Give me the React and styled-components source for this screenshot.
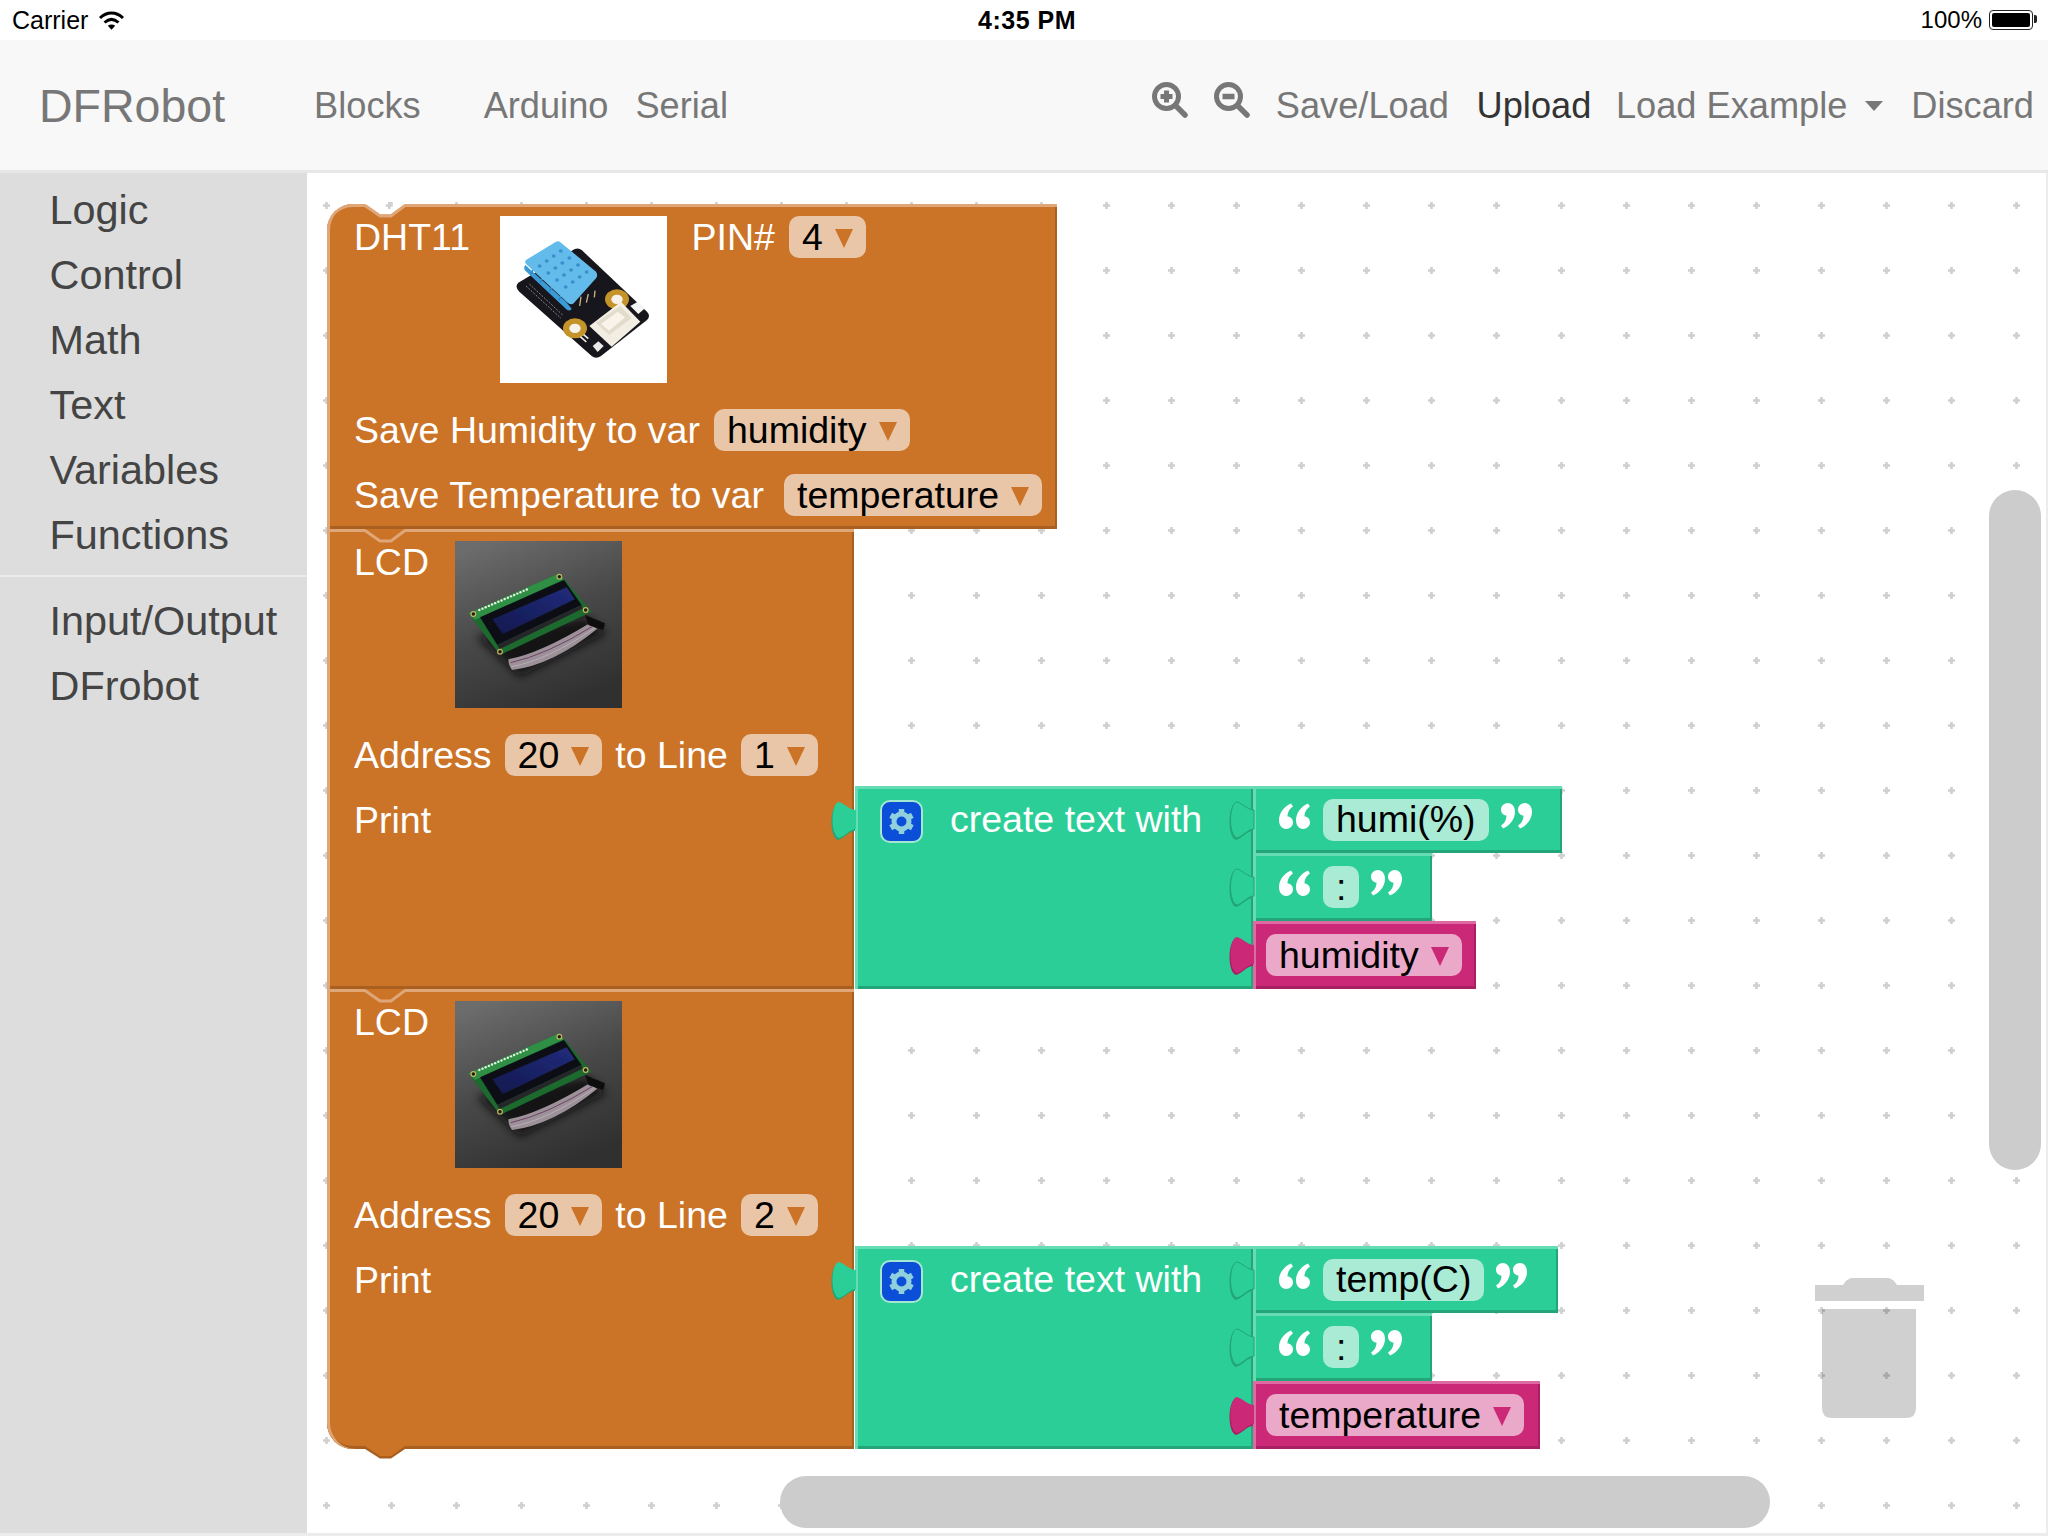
import React from "react";
import styled, { createGlobalStyle } from "styled-components";

const ORANGE = { fill: "#cb7327", light: "#dfa677", dark: "#a85f1f", field: "#e9c6a8" };
const GREEN = { fill: "#2bce96", light: "#65dcb4", dark: "#23a577", field: "#aaebd5" };
const PINK = { fill: "#cb2878", light: "#dd6aa2", dark: "#a82063", field: "#eaa9c9" };

const gridTile = encodeURIComponent(
  '<svg xmlns="http://www.w3.org/2000/svg" width="65" height="65"><path d="M31.2 29h2.6v2.2H36v2.6h-2.2V36h-2.6v-2.2H29v-2.6h2.2z" fill="#cfcfcf"/></svg>'
);

const Global = createGlobalStyle`
  * { box-sizing: border-box; }
  html, body { margin: 0; padding: 0; background: #fff; }
  body { font-family: "Liberation Sans", Arial, sans-serif; }
`;

const Page = styled.div`
  width: 2048px;
  height: 1536px;
  display: flex;
  flex-direction: column;
  overflow: hidden;
  background: #fff;
`;

/* status bar */
const StatusBar = styled.div`
  height: 40px;
  display: grid;
  grid-template-columns: 1fr auto 1fr;
  align-items: center;
  padding: 0 12px;
  font-size: 25px;
  color: #000;
`;
const StatusLeft = styled.div`
  display: flex;
  align-items: center;
  gap: 10px;
`;
const StatusRight = styled.div`
  display: flex;
  align-items: center;
  justify-content: flex-end;
  gap: 7px;
  font-size: 24px;
`;
const Clock = styled.div`
  font-weight: 700;
  font-size: 25px;
  letter-spacing: 0.5px;
  margin-left: 6px;
`;
const Battery = styled.div`
  position: relative;
  width: 44px;
  height: 20px;
  margin-right: 3px;
  padding: 2px;
  border: 1.5px solid #222;
  border-radius: 4px;
  &::before {
    content: "";
    display: block;
    height: 100%;
    background: #000;
    border-radius: 2px;
  }
  &::after {
    content: "";
    position: absolute;
    right: -5px;
    top: 4px;
    width: 3px;
    height: 8px;
    background: #222;
    border-radius: 0 2px 2px 0;
  }
`;

/* navbar */
const Navbar = styled.div`
  height: 133px;
  display: flex;
  align-items: center;
  padding: 2px 14px 0 39px;
  background: #f8f8f8;
  border-bottom: 3px solid #e7e7e7;
  color: #777;
  font-size: 36.2px;
`;
const Brand = styled.div`
  font-size: 46.5px;
  margin-right: 89px;
`;
const NavLink = styled.div`
  margin-left: ${(p) => p.$gap || 0}px;
  color: ${(p) => (p.$active ? "#333" : "#777")};
`;
const NavSpacer = styled.div`
  flex: 1;
`;
const ZoomIcon = styled.svg`
  width: 36px;
  height: 36px;
  margin-left: ${(p) => p.$gap || 0}px;
  margin-top: -12px;
`;
const Caret = styled.span`
  margin-left: 18px;
  width: 0;
  height: 0;
  border-left: 9px solid transparent;
  border-right: 9px solid transparent;
  border-top: 10px solid #777;
`;

/* main */
const Main = styled.div`
  flex: 1;
  display: flex;
  min-height: 0;
  border-bottom: 3px solid #ececec;
`;
const Sidebar = styled.div`
  width: 307px;
  padding-top: 5px;
  background: #ddd;
  color: #444;
  font-size: 41.4px;
`;
const TreeItem = styled.div`
  height: 65px;
  line-height: 65px;
  padding-left: 49.5px;
`;
const TreeSeparator = styled.div`
  height: 2px;
  margin: 7px 0 12px;
  background: #ebebeb;
`;
const Workspace = styled.div`
  position: relative;
  flex: 1;
  overflow: hidden;
  border-right: 2px solid #ececec;
  background-color: #fff;
  background-image: url("data:image/svg+xml,${gridTile}");
  background-position: -13.2px -0.5px;
`;
const BlockStack = styled.div`
  position: absolute;
  left: 20px;
  top: 31px;
  display: flex;
  flex-direction: column;
  font-size: 37.5px;
  color: #fff;
`;
const StackRow = styled.div`
  display: flex;
  align-items: flex-start;
`;
const Bevel = styled.div`
  position: relative;
  background: ${(p) => p.$c.fill};
  box-shadow: inset 3px 0 0 ${(p) => p.$c.light}, inset 0 3px 0 ${(p) => p.$c.light},
    inset -2px 0 0 ${(p) => p.$c.dark}, inset 0 -3px 0 ${(p) => p.$c.dark};
`;
const StatementBlock = styled(Bevel)`
  width: ${(p) => p.$w}px;
  height: ${(p) => p.$h}px;
  padding: 12px 0 0 27px;
  border-radius: ${(p) => (p.$hat ? "26px" : "0")} 0 0 ${(p) => (p.$last ? "26px" : "0")};
  display: flex;
  flex-direction: column;
  gap: 23px;
`;
const TopRow = styled.div`
  display: flex;
  align-items: flex-start;
  gap: 14px;
  margin-bottom: 3px;
`;
const FieldRow = styled.div`
  display: flex;
  align-items: center;
  gap: ${(p) => p.$gap || 14}px;
  height: 42px;
`;
const Label = styled.span`
  line-height: 42px;
  white-space: nowrap;
  min-width: ${(p) => p.$w || 0}px;
`;
const Field = styled.span`
  display: inline-flex;
  align-items: center;
  height: 42px;
  padding: 0 13px;
  gap: 12px;
  border-radius: 10px;
  background: ${(p) => p.$c.field};
  color: #000;
  white-space: nowrap;
`;
const Arrow = styled.span`
  width: 0;
  height: 0;
  margin-top: 2px;
  border-left: 9px solid transparent;
  border-right: 9px solid transparent;
  border-top: 19px solid ${(p) => p.$c.fill};
`;
const Picture = styled.svg`
  display: block;
  width: 167px;
  height: 167px;
  margin: 0 11px;
`;
const NotchSvg = styled.svg`
  position: absolute;
  left: 38px;
  top: 0;
  overflow: visible;
`;
const TabBottom = styled.svg`
  position: absolute;
  left: 38px;
  bottom: -11px;
  overflow: visible;
`;
const ValueWrap = styled.div`
  display: flex;
  align-items: flex-start;
  margin: 257px 0 0 1px;
`;
const CreateBlock = styled(Bevel)`
  width: 398px;
  height: 203px;
  padding: 12px 0 0 25px;
  display: flex;
  align-items: flex-start;
  gap: 27px;
`;
const GearBox = styled.svg`
  display: block;
  width: 43px;
  height: 43px;
  margin-top: 2px;
`;
const Inputs = styled.div`
  display: flex;
  flex-direction: column;
`;
const ValueBlock = styled(Bevel)`
  height: ${(p) => p.$h}px;
  width: ${(p) => p.$w}px;
  padding-left: ${(p) => p.$pad}px;
  display: flex;
  align-items: center;
`;
const Quote = styled.svg`
  width: 31px;
  height: 26px;
  margin: -8px 0 0 ${(p) => p.$before}px;
  margin-right: ${(p) => p.$after}px;
`;
const TabSvg = styled.svg`
  position: absolute;
  left: -24px;
  top: 16px;
  width: 25px;
  height: 38px;
  overflow: visible;
`;
const VScroll = styled.div`
  position: absolute;
  left: 1682px;
  top: 317px;
  width: 52px;
  height: 680px;
  border-radius: 26px;
  background: #ccc;
`;
const HScroll = styled.div`
  position: absolute;
  left: 473px;
  top: 1303px;
  width: 990px;
  height: 52px;
  border-radius: 26px;
  background: #ccc;
`;
const Trash = styled.svg`
  position: absolute;
  left: 1508px;
  top: 1105px;
  width: 109px;
  height: 141px;
`;

const Magnifier = ({ gap, plus }) => (
  <ZoomIcon $gap={gap} viewBox="0 0 36 36">
    <circle cx="14.5" cy="14.5" r="12" fill="none" stroke="#777" strokeWidth="5" />
    <path d="M23.5 23.5L33 33" stroke="#777" strokeWidth="5.5" strokeLinecap="round" />
    {plus ? (
      <path d="M14.5 8.5v12M8.5 14.5h12" stroke="#777" strokeWidth="5" />
    ) : (
      <path d="M8.5 14.5h12" stroke="#777" strokeWidth="5.5" />
    )}
  </ZoomIcon>
);

const Wifi = () => (
  <svg width="27" height="19" viewBox="0 0 27 19">
    <path d="M2 7C9 .3 18 .3 25 7M6.5 11.5c4.5-4 9.500-4 14 0" fill="none" stroke="#000" strokeWidth="3" />
    <path d="M9.800 14.800l3.700 3.900 3.700-3.900c-2.200-1.700-5.200-1.700-7.400 0z" fill="#000" />
  </svg>
);

const DhtPicture = () => {
  const holes = [];
  for (let i = 0; i < 4; i++) {
    for (let j = 0; j < 4; j++) {
      holes.push(<ellipse key={i + "-" + j} cx={176 + i * 26 + j * 21} cy={198 + i * 21 - j * 15} rx="6" ry="5" fill="#3a8fca" />);
    }
  }
  return (
    <Picture viewBox="57 48 501 501">
      <defs>
        <filter id="soft">
          <feGaussianBlur stdDeviation="2" />
        </filter>
      </defs>
      <rect x="57" y="48" width="501" height="501" fill="#fff" />
      <g filter="url(#soft)">
        <path d="M112 248L280 148Q292 142 302 150L498 335Q510 348 498 360L360 468Q345 478 332 468L115 275Q100 260 112 248Z" fill="#17151a" />
        <path d="M133 195L255 305L272 326Q266 336 256 328L133 212Q126 204 133 195Z" fill="#3a9bd6" />
        <path d="M150 222L158 205M178 248L186 231M206 274L214 257M234 300L242 283" stroke="#2f86c2" strokeWidth="5" />
        <path d="M135 180L225 125Q232 122 240 128L345 215Q352 225 345 235L278 310Q270 316 260 308L135 192Q130 186 135 180Z" fill="#63bbec" />
        {holes}
        <path d="M300 290L296 318M322 282L316 308M342 272L340 292" stroke="#c9b48a" strokeWidth="4" />
        <path d="M135 258L240 355M145 252L245 345" stroke="#8a8a8a" strokeWidth="3" strokeDasharray="6 4" />
        <ellipse cx="408" cy="298" rx="36" ry="30" fill="#c4932c" />
        <ellipse cx="408" cy="298" rx="17" ry="14" fill="#f7f3ea" />
        <ellipse cx="282" cy="385" rx="36" ry="30" fill="#c4932c" />
        <ellipse cx="282" cy="385" rx="17" ry="14" fill="#f7f3ea" />
        <path d="M325 378L420 305L478 365L392 440Z" fill="#f3eee3" />
        <path d="M345 368L418 318L452 355L384 405Z" fill="#e2dccd" />
        <path d="M360 372L410 335L432 352L384 392Z" fill="#f8f4ea" />
        <path d="M448 318L470 305L492 325L472 342Z" fill="#f4f4f4" />
        <path d="M335 438L352 424L368 438L350 456Z" fill="#e8e8e8" />
        <path d="M298 410L316 426M308 404L322 416" stroke="#eee" strokeWidth="5" />
      </g>
    </Picture>
  );
};

const LcdPicture = ({ idp }) => {
  const pins = [];
  for (let i = 0; i < 16; i++) {
    pins.push(<circle key={i} cx={118 + i * 9.5} cy={240 - i * 4.1} r="3.600" fill="#e8efe0" />);
  }
  return (
    <Picture viewBox="45 33 501 501">
      <defs>
        <linearGradient id={idp + "bg"} x1="0.2" y1="0" x2="0.6" y2="1">
          <stop offset="0" stopColor="#6d6c6c" />
          <stop offset="0.5" stopColor="#484848" />
          <stop offset="1" stopColor="#303030" />
        </linearGradient>
        <linearGradient id={idp + "lcd"} x1="0" y1="1" x2="1" y2="0">
          <stop offset="0" stopColor="#10184e" />
          <stop offset="1" stopColor="#222c7c" />
        </linearGradient>
        <filter id={idp + "soft"}>
          <feGaussianBlur stdDeviation="1.800" />
        </filter>
        <filter id={idp + "shadow"}>
          <feGaussianBlur stdDeviation="14" />
        </filter>
      </defs>
      <rect x="45" y="33" width="501" height="501" fill={`url(#${idp}bg)`} />
      <path d="M110 320L440 260L500 310L240 440Z" fill="#080808" opacity="0.85" filter={`url(#${idp}shadow)`} />
      <g filter={`url(#${idp}soft)`}>
        <path d="M85 250L358 130L455 245L180 375Z" fill="#1a6a2e" />
        <path d="M85 250L358 130L372 148L105 270Z" fill="#2f8f45" />
        <path d="M120 262L372 150L425 225L172 345Z" fill="#101115" />
        <path d="M158 268L380 172L404 208L188 312Z" fill={`url(#${idp}lcd)`} />
        <path d="M172 345L425 225L427 236L178 358Z" fill="#26272a" />
        {pins}
        <circle cx="100" cy="252" r="7" fill="#1d1d10" stroke="#c8b465" strokeWidth="3.500" />
        <circle cx="358" cy="140" r="7" fill="#1d1d10" stroke="#c8b465" strokeWidth="3.500" />
        <circle cx="437" cy="240" r="7" fill="#1d1d10" stroke="#c8b465" strokeWidth="3.500" />
        <circle cx="180" cy="365" r="7" fill="#1d1d10" stroke="#c8b465" strokeWidth="3.500" />
        <path d="M205 388Q300 370 445 282L472 296Q340 404 216 420Q205 405 205 388Z" fill="#9c9199" />
        <path d="M212 398Q320 374 456 290" fill="none" stroke="#6f4266" strokeWidth="3" />
        <path d="M214 410Q320 392 464 294" fill="none" stroke="#b9aeb5" strokeWidth="3" />
        <path d="M435 255L495 280L490 300L445 285Z" fill="#0f0f0f" />
      </g>
    </Picture>
  );
};

const Notch = ({ c, fill, dot }) => (
  <NotchSvg width="40" height="13">
    <path d="M0 0L15 10.500H26L40 0Z" fill={fill} />
    <path d="M0 1.500L15 12H26L40 1.500" fill="none" stroke={c.light} strokeWidth="3" />
    {dot && <path d="M23 -2h2.600v2.200h2.200v2.600h-2.200v2.200H23V2.800h-2.200V.2H23z" fill="#cfcfcf" />}
  </NotchSvg>
);

const tabShape = "M25 8C19 8 13 1 8 0C4 0 1.500 9 1.500 18C1.500 27 4 35 8 36C13 35 19 27 25 27Z";

const Tab = ({ c, outline }) => (
  <TabSvg viewBox="0 0 25 38">
    <path d={tabShape} fill={c.dark} transform="translate(-1 2)" />
    <path d={tabShape} fill={c.fill} stroke={outline ? c.dark : "none"} strokeWidth="1" />
  </TabSvg>
);

const QuoteMark = ({ close, before = 0, after = 0 }) => (
  <Quote viewBox="0 0 31 26" $before={before} $after={after}>
    <g fill="#fff" transform={close ? "rotate(180 15.500 13)" : undefined}>
      <path d="M12 0.500C5 3.500 0 10 0 17C0 22.500 3 26 7 26C11 26 14 23 14 19.500C14 16 11.500 13.500 8.500 13.500C8.500 10 10 6 14 3.500Z" />
      <path d="M29 0.500C22 3.500 17 10 17 17C17 22.500 20 26 24 26C28 26 31 23 31 19.500C31 16 28.500 13.500 25.500 13.500C25.500 10 27 6 31 3.500Z" />
    </g>
  </Quote>
);

const Gear = () => (
  <GearBox viewBox="0 0 43 43">
    <rect x="1" y="1" width="41" height="41" rx="9" fill="#0b4fd8" stroke="#a4e8d2" strokeWidth="2" />
    <g stroke="#8fd0dc" fill="none">
      <circle cx="21.500" cy="21.500" r="7.500" strokeWidth="5" />
      <path d="M21.500 9v5M21.500 29v5M10.700 15.250l4.300 2.500M28 25.250l4.300 2.500M10.700 27.750l4.300-2.500M28 17.750l4.300-2.500" strokeWidth="5.500" />
    </g>
  </GearBox>
);

const TextInput = ({ text, width, height }) => (
  <ValueBlock $c={GREEN} $w={width} $h={height} $pad={26}>
    <Tab c={GREEN} outline />
    <QuoteMark after={13} />
    <Field $c={GREEN}>{text}</Field>
    <QuoteMark close before={12} />
  </ValueBlock>
);

const LcdBlock = ({ line, head, mid, idp, last, varName, varWidth }) => (
  <StackRow>
    <StatementBlock $c={ORANGE} $w={527} $h={460} $last={last}>
      <Notch c={ORANGE} fill={ORANGE.fill} />
      {last && (
        <TabBottom width="40" height="11">
          <path d="M0 0L15 9.500H26L40 0Z" fill={ORANGE.dark} />
          <path d="M0 -3L15 7H26L40 -3Z" fill={ORANGE.fill} />
        </TabBottom>
      )}
      <TopRow>
        <Label $w={76}>LCD</Label>
        <LcdPicture idp={idp} />
      </TopRow>
      <FieldRow $gap={13}>
        <Label>Address</Label>
        <Field $c={ORANGE}>
          20
          <Arrow $c={ORANGE} />
        </Field>
        <Label>to Line</Label>
        <Field $c={ORANGE}>
          {line}
          <Arrow $c={ORANGE} />
        </Field>
      </FieldRow>
      <FieldRow>
        <Label>Print</Label>
      </FieldRow>
    </StatementBlock>
    <ValueWrap>
      <CreateBlock $c={GREEN}>
        <Tab c={GREEN} />
        <Gear />
        <Label>create text with</Label>
      </CreateBlock>
      <Inputs>
        <TextInput text={head} width={mid} height={67} />
        <TextInput text=":" width={179} height={68} />
        <ValueBlock $c={PINK} $w={varWidth} $h={68} $pad={13}>
          <Tab c={PINK} />
          <Field $c={PINK}>
            {varName}
            <Arrow $c={PINK} />
          </Field>
        </ValueBlock>
      </Inputs>
    </ValueWrap>
  </StackRow>
);

export default function App() {
  return (
    <Page>
      <Global />
      <StatusBar>
        <StatusLeft>
          Carrier
          <Wifi />
        </StatusLeft>
        <Clock>4:35 PM</Clock>
        <StatusRight>
          100%
          <Battery />
        </StatusRight>
      </StatusBar>
      <Navbar>
        <Brand>DFRobot</Brand>
        <NavLink>Blocks</NavLink>
        <NavLink $gap={63}>Arduino</NavLink>
        <NavLink $gap={27}>Serial</NavLink>
        <NavSpacer />
        <Magnifier plus />
        <Magnifier gap={26} />
        <NavLink $gap={26}>Save/Load</NavLink>
        <NavLink $gap={27.7} $active>
          Upload
        </NavLink>
        <NavLink $gap={24.7}>Load Example</NavLink>
        <Caret />
        <NavLink $gap={28}>Discard</NavLink>
      </Navbar>
      <Main>
        <Sidebar>
          <TreeItem>Logic</TreeItem>
          <TreeItem>Control</TreeItem>
          <TreeItem>Math</TreeItem>
          <TreeItem>Text</TreeItem>
          <TreeItem>Variables</TreeItem>
          <TreeItem>Functions</TreeItem>
          <TreeSeparator />
          <TreeItem>Input/Output</TreeItem>
          <TreeItem>DFrobot</TreeItem>
        </Sidebar>
        <Workspace>
          <BlockStack>
            <StatementBlock $c={ORANGE} $w={730} $h={325} $hat>
              <Notch c={ORANGE} fill="#fff" dot />
              <TopRow>
                <Label $w={120.5}>DHT11</Label>
                <DhtPicture />
                <Label>PIN#</Label>
                <Field $c={ORANGE}>
                  4
                  <Arrow $c={ORANGE} />
                </Field>
              </TopRow>
              <FieldRow>
                <Label>Save Humidity to var</Label>
                <Field $c={ORANGE}>
                  humidity
                  <Arrow $c={ORANGE} />
                </Field>
              </FieldRow>
              <FieldRow>
                <Label $w={416}>Save Temperature to var</Label>
                <Field $c={ORANGE}>
                  temperature
                  <Arrow $c={ORANGE} />
                </Field>
              </FieldRow>
            </StatementBlock>
            <LcdBlock line="1" idp="a" head="humi(%)" mid={309} varName="humidity" varWidth={223} />
            <LcdBlock line="2" idp="b" last head="temp(C)" mid={305} varName="temperature" varWidth={287} />
          </BlockStack>
          <VScroll />
          <HScroll />
          <Trash viewBox="0 0 109 141">
            <path
              d="M0 7H28C31 2 34 0 38 0H72C76 0 79 2 82 7H109V23H0ZM7 31H101V130Q101 140 91 140H17Q7 140 7 130Z"
              fill="#000"
              opacity="0.185"
            />
          </Trash>
        </Workspace>
      </Main>
    </Page>
  );
}
